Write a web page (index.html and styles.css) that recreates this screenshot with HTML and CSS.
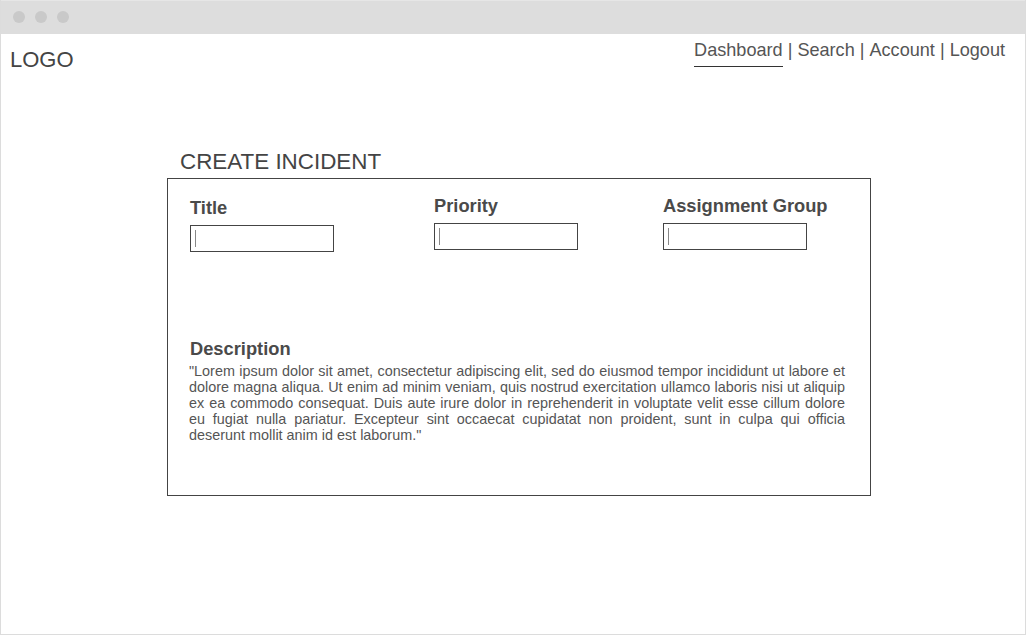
FILE: index.html
```html
<!DOCTYPE html>
<html>
<head>
<meta charset="utf-8">
<link rel="stylesheet" href="styles.css">
</head>
<body>
<div class="window">
  <div class="titlebar">
    <span class="dot"></span><span class="dot"></span><span class="dot"></span>
  </div>
  <header class="header">
    <div class="logo">LOGO</div>
    <nav class="nav">
      <a class="nav-link active">Dashboard</a><span class="sep"> | </span><a class="nav-link">Search</a><span class="sep"> | </span><a class="nav-link">Account</a><span class="sep"> | </span><a class="nav-link">Logout</a>
    </nav>
  </header>
  <main class="main">
    <h1 class="page-title">CREATE INCIDENT</h1>
    <section class="card">
      <div class="fields">
        <div class="field field-title">
          <label class="label">Title</label>
          <div class="input"><span class="caret"></span></div>
        </div>
        <div class="field">
          <label class="label">Priority</label>
          <div class="input"><span class="caret"></span></div>
        </div>
        <div class="field">
          <label class="label">Assignment Group</label>
          <div class="input"><span class="caret"></span></div>
        </div>
      </div>
      <div class="description">
        <div class="label">Description</div>
        <p class="desc-text">"Lorem ipsum dolor sit amet, consectetur adipiscing elit, sed do eiusmod tempor incididunt ut labore et dolore magna aliqua. Ut enim ad minim veniam, quis nostrud exercitation ullamco laboris nisi ut aliquip ex ea commodo consequat. Duis aute irure dolor in reprehenderit in voluptate velit esse cillum dolore eu fugiat nulla pariatur. Excepteur sint occaecat cupidatat non proident, sunt in culpa qui officia deserunt mollit anim id est laborum."</p>
      </div>
    </section>
  </main>
</div>
</body>
</html>
```

FILE: styles.css
```css
* { box-sizing: border-box; }
html, body { margin: 0; padding: 0; background: #fff; }
body {
  width: 1026px;
  height: 635px;
  font-family: "Liberation Sans", Arial, sans-serif;
  color: #444;
}
.window {
  width: 1026px;
  height: 635px;
  border: 1px solid #dcdcdc;
  border-top: none;
  background: #fff;
  display: flex;
  flex-direction: column;
}
.titlebar {
  height: 34px;
  background: #dddddd;
  display: flex;
  align-items: center;
  gap: 10px;
  padding-left: 12px;
  padding-bottom: 1px;
  border-top: 1px solid #e6e6e6;
}
.dot {
  width: 12px;
  height: 12px;
  border-radius: 50%;
  background: #c9c9c9;
}
.header {
  display: flex;
  justify-content: space-between;
  align-items: flex-start;
  padding: 0 20px 0 9px;
}
.logo {
  font-size: 22px;
  margin-top: 13px;
  color: #444;
}
.nav {
  font-size: 18.1px;
  margin-top: 6px;
  color: #555;
}
.nav-link {
  color: #555;
  display: inline-block;
  padding-bottom: 5px;
}
.nav-link.active {
  border-bottom: 1px solid #333;
}
.sep { color: #555; }
.main {
  padding-left: 166px;
  padding-top: 76px;
}
.page-title {
  font-weight: normal;
  font-size: 22.4px;
  margin: 0 0 3px 13px;
  color: #444;
  line-height: 26px;
}
.card {
  width: 704px;
  height: 318px;
  border: 1px solid #444;
  padding: 17px 25px 0 21px;
}
.fields {
  display: grid;
  grid-template-columns: 245px 229px auto;
  align-items: start;
}
.field-title { margin-top: 2px; }
.field:first-child { padding-left: 1px; }
.label {
  display: block;
  font-weight: bold;
  font-size: 18.3px;
  color: #4a4a4a;
  line-height: 20px;
  margin-bottom: 7px;
}
.input {
  width: 144px;
  height: 27px;
  border: 1px solid #444;
  display: flex;
  align-items: center;
  padding-left: 4px;
}
.caret {
  width: 1px;
  height: 17px;
  background: #777;
  border-left: 1px solid #888;
}
.description {
  margin-top: 87px;
  padding-left: 1px;
}
.description .label {
  margin-bottom: 4px;
}
.desc-text {
  margin: 0;
  font-family: "Liberation Sans", Arial, sans-serif;
  font-size: 14.4px;
  line-height: 16px;
  text-align: justify;
  color: #555;
  width: 656px;
  margin-left: -1px;
}
```
